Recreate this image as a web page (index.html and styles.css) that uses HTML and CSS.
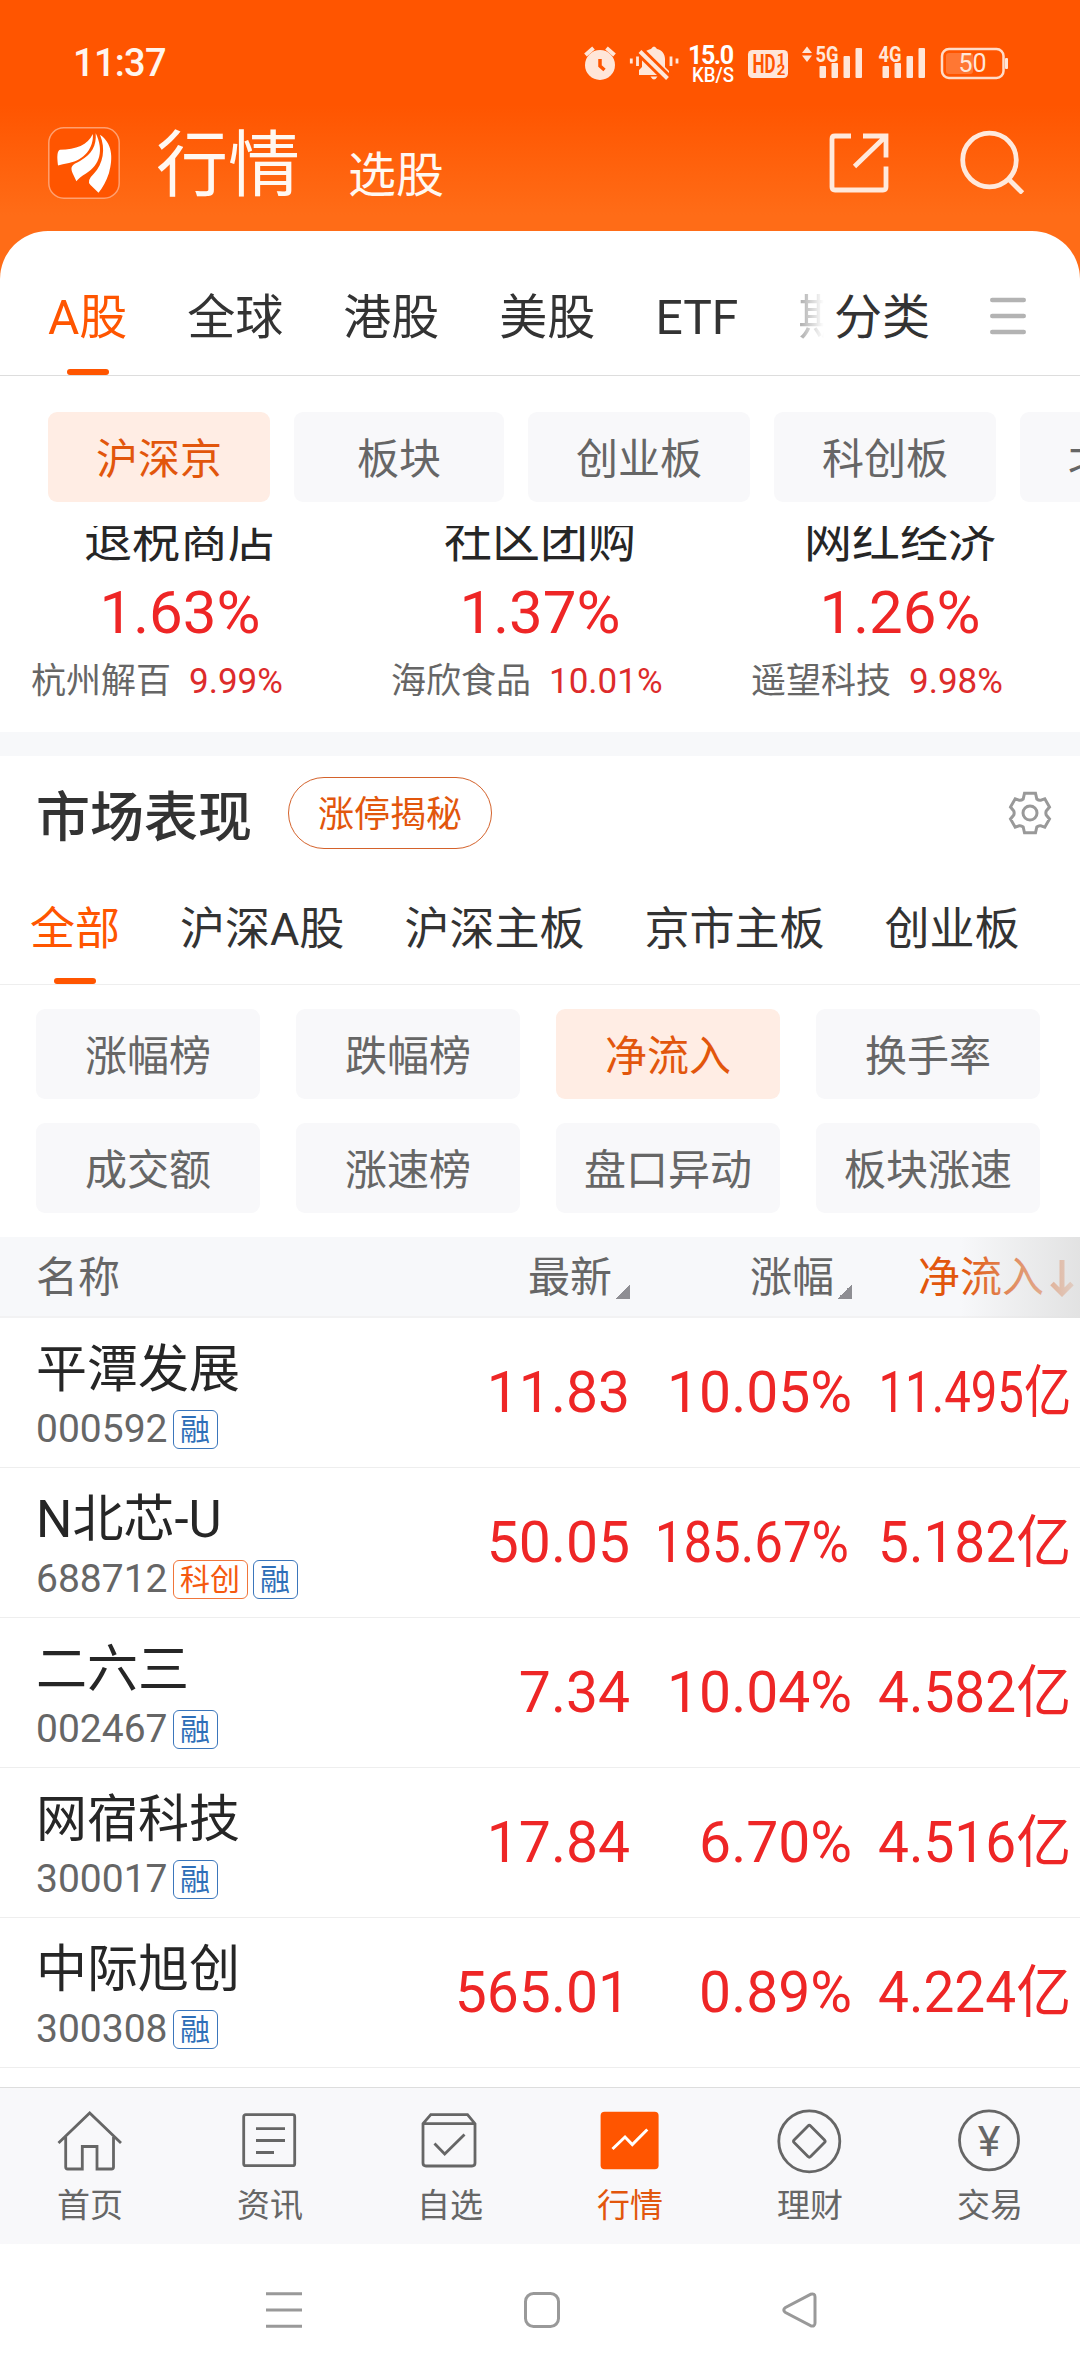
FILE: index.html
```html
<!DOCTYPE html>
<html lang="zh-CN">
<head>
  <meta charset="UTF-8" />
  <meta name="viewport" content="width=device-width, initial-scale=1.0"/>
  <title>行情</title>
  <link rel="stylesheet" href="styles.css">
</head>
<body>
  <div class="phone">

    <!-- Status bar -->
    <div class="status-bar">
      <span class="time">11:37</span>
      <svg class="status-icons" width="430" height="40" viewBox="580 42 430 40">
        <!-- alarm -->
        <circle cx="600" cy="64" r="15"/>
        <path d="M585.500 54l8-7M614.500 54l-8-7" class="line"/>
        <path d="M600 58v7l4.500 4" class="cut"/>
        <!-- muted bell -->
        <path d="M639 74v-5l3-3v-8c0-6 4-9 9-10q3-5 6 0c5 1 8 5 8 10v8l4 4v4zM650.500 75.500h7q-3.500 6-7 0z"/>
        <path d="M639 49.500L669 79" class="slash-gap"/>
        <path d="M640 50.500L667.500 77.500" class="line"/>
        <path d="M631.300 57.500v5M637.500 55.500v9.500M671 55.500v9.500M677 57.500v5" class="line thin"/>
        <!-- network speed -->
        <text x="711" y="63" class="speed" textLength="46">15.0</text>
        <text x="713" y="81" class="unit" textLength="42" lengthAdjust="spacingAndGlyphs">KB/S</text>
        <!-- HD -->
        <rect x="748" y="49" width="40" height="28" rx="4.500"/>
        <text x="764" y="71.500" class="hd" textLength="23" lengthAdjust="spacingAndGlyphs">HD</text>
        <text x="781" y="62.500" class="hd-num">1</text>
        <text x="781" y="74" class="hd-num">2</text>
        <!-- 5G signal -->
        <path d="M802 52l5-6.500 5 6.500zM802 54.500l5 6.500 5-6.500z"/>
        <text x="827" y="60.500" class="net" textLength="23" lengthAdjust="spacingAndGlyphs">5G</text>
        <rect x="819.500" y="65" width="6.500" height="12" rx="1"/>
        <rect x="831.500" y="62" width="6.500" height="15" rx="1"/>
        <rect x="843.500" y="55" width="6.500" height="22" rx="1"/>
        <rect x="855.500" y="47" width="6.500" height="30" rx="1"/>
        <!-- 4G signal -->
        <text x="890" y="60.500" class="net" textLength="23" lengthAdjust="spacingAndGlyphs">4G</text>
        <rect x="882.500" y="65" width="6.500" height="12" rx="1"/>
        <rect x="894.500" y="62" width="6.500" height="15" rx="1"/>
        <rect x="906.500" y="55" width="6.500" height="22" rx="1"/>
        <rect x="918.500" y="47" width="6.500" height="30" rx="1"/>
        <!-- battery -->
        <rect x="942" y="48" width="61.500" height="29" rx="7" class="battery"/>
        <rect x="946" y="52" width="27" height="21" rx="3" class="charge"/>
        <rect x="1005" y="57" width="3" height="11" rx="1"/>
        <text x="972.500" y="71" class="percent">50</text>
      </svg>
    </div>

    <!-- Header -->
    <div class="header">
      <svg class="logo" width="72" height="72" viewBox="0 0 72 72">
        <rect x=".8" y=".8" width="70.400" height="70.400" rx="15"/>
        <path d="M44.800 7C40 18 28 22.500 12 22.700Q8 24 10 38.500Q14 37 21 36C36 33 46 21 44.800 7z"/>
        <path d="M47.700 6.300C48.500 19 44 27 32 34C24 38 22 39 24.500 46L28.400 54.300Q31 50.500 38 46.500C52 38 56 23 47.700 6.300z"/>
        <path d="M52 7.700C64 16 65.500 30 61 46Q57 58 50.500 65.700L42.500 58Q38 54 46 46.500C55 37 58 22 52 7.700z"/>
      </svg>
      <h1 class="page-title">行情</h1>
      <span class="sub-title">选股</span>
      <svg class="share" width="60" height="60" viewBox="0 0 60 60">
        <path d="M22 3H6Q3 3 3 6V54Q3 57 6 57H54Q57 57 57 54V33.500M34 3H57V24.500M55.500 4.500L25.500 33.500"/>
      </svg>
      <svg class="search" width="66" height="64" viewBox="0 0 66 64">
        <circle cx="30.500" cy="30" r="26.800"/>
        <path d="M49.500 49L63.500 63"/>
      </svg>
    </div>

    <div class="panel">
      <!-- Market tabs -->
      <div class="market-tabs">
        <div class="market-scroll">
          <span class="active">A股</span>
          <span>全球</span>
          <span>港股</span>
          <span>美股</span>
          <span>ETF</span>
          <span>期</span>
        </div>
        <span class="category">分类</span>
        <svg class="menu" width="36" height="38" viewBox="0 0 36 38">
          <path d="M2.200 3H33.800M2.200 19H33.800M2.200 35H33.800"/>
        </svg>
      </div>

      <div class="board-chips">
        <span class="chip active">沪深京</span>
        <span class="chip short">板块</span>
        <span class="chip">创业板</span>
        <span class="chip">科创板</span>
        <span class="chip">北交所</span>
      </div>

      <!-- Hot sectors, scrolled under the chips -->
      <div class="sectors">
        <div class="sector">
          <div class="sector-name">退税商店</div>
          <div class="sector-rate">1.63%</div>
          <div class="sector-stock">杭州解百<b>9.99%</b></div>
        </div>
        <div class="sector">
          <div class="sector-name">社区团购</div>
          <div class="sector-rate">1.37%</div>
          <div class="sector-stock">海欣食品<b>10.01%</b></div>
        </div>
        <div class="sector">
          <div class="sector-name">网红经济</div>
          <div class="sector-rate">1.26%</div>
          <div class="sector-stock">遥望科技<b>9.98%</b></div>
        </div>
      </div>

      <!-- Market performance -->
      <div class="section-head">
        <h2>市场表现</h2>
        <span class="pill">涨停揭秘</span>
        <svg class="gear" width="44" height="44" viewBox="0 0 44 44">
          <path d="M16.500 2.200H27.500L28.800 8Q31 9.800 33 9.200L36.800 7.800L41.500 16L38.200 20Q37.500 22 38.200 24L41.500 28L36.800 36.200L33 34.800Q31 34.200 28.800 36L27.500 41.800H16.500L15.200 36Q13 34.200 11 34.800L7.200 36.200L2.500 28L5.800 24Q6.500 22 5.800 20L2.500 16L7.200 7.800L11 9.200Q13 9.800 15.200 8z"/>
          <circle cx="22" cy="22" r="7"/>
        </svg>
      </div>

      <div class="list-tabs">
        <span class="active">全部</span>
        <span>沪深A股</span>
        <span>沪深主板</span>
        <span>京市主板</span>
        <span>创业板</span>
      </div>

      <div class="rank-grid">
        <span class="chip">涨幅榜</span>
        <span class="chip">跌幅榜</span>
        <span class="chip active">净流入</span>
        <span class="chip">换手率</span>
        <span class="chip">成交额</span>
        <span class="chip">涨速榜</span>
        <span class="chip">盘口异动</span>
        <span class="chip">板块涨速</span>
      </div>

      <!-- Stock table -->
      <div class="row table-head">
        <span class="name-col">名称</span>
        <span class="sortable">最新</span>
        <span class="sortable">涨幅</span>
        <span class="sorted">净流入<svg width="24" height="38" viewBox="0 0 24 38"><path d="M12 1V34M2 24.500L12 34.500L22 24.500"/></svg></span>
      </div>
      <div class="row">
        <div class="name-col">
          <div class="name">平潭发展</div>
          <div class="code">000592<i class="tag">融</i></div>
        </div>
        <span class="num">11.83</span>
        <span class="num">10.05%</span>
        <span class="num fit-8">11.495亿</span>
      </div>
      <div class="row">
        <div class="name-col">
          <div class="name">N北芯-U</div>
          <div class="code">688712<i class="tag tag-star">科创</i><i class="tag">融</i></div>
        </div>
        <span class="num">50.05</span>
        <span class="num fit-7">185.67%</span>
        <span class="num fit-6">5.182亿</span>
      </div>
      <div class="row">
        <div class="name-col">
          <div class="name">二六三</div>
          <div class="code">002467<i class="tag">融</i></div>
        </div>
        <span class="num">7.34</span>
        <span class="num">10.04%</span>
        <span class="num fit-6">4.582亿</span>
      </div>
      <div class="row">
        <div class="name-col">
          <div class="name">网宿科技</div>
          <div class="code">300017<i class="tag">融</i></div>
        </div>
        <span class="num">17.84</span>
        <span class="num">6.70%</span>
        <span class="num fit-6">4.516亿</span>
      </div>
      <div class="row">
        <div class="name-col">
          <div class="name">中际旭创</div>
          <div class="code">300308<i class="tag">融</i></div>
        </div>
        <span class="num">565.01</span>
        <span class="num">0.89%</span>
        <span class="num fit-6">4.224亿</span>
      </div>
    </div>

    <!-- Bottom navigation -->
    <div class="bottom-nav">
      <div class="nav-item">
        <svg width="72" height="72" viewBox="0 0 72 72"><path d="M4.500 37L35.700 7L67 37M11.700 31V61Q11.700 63 13.700 63H28.300V40.500H43V63H57.500Q59.500 63 59.500 61V31"/></svg>
        <span>首页</span>
      </div>
      <div class="nav-item">
        <svg width="72" height="72" viewBox="0 0 72 72"><rect x="9.700" y="8.700" width="51" height="51" rx="2"/><path d="M22 22.700H51M22 34.500H51M22 46.500H40"/></svg>
        <span>资讯</span>
      </div>
      <div class="nav-item">
        <svg width="72" height="72" viewBox="0 0 72 72"><path d="M9 17.700L16.800 8.700H53.500L61 17.700V57Q61 60 58 60H12Q9 60 9 57zM9 17.700H61M20.500 37.500L30.700 48L50.500 28.500"/></svg>
        <span>自选</span>
      </div>
      <div class="nav-item active">
        <svg width="72" height="72" viewBox="0 0 72 72"><rect x="6.600" y="5.700" width="58" height="57.600" rx="4" class="solid"/><path d="M18.500 43L31 31L38.300 38.500L53.300 23.500"/></svg>
        <span>行情</span>
      </div>
      <div class="nav-item">
        <svg width="72" height="72" viewBox="0 0 72 72"><circle cx="35.300" cy="35.300" r="30.500"/><path d="M34 20Q35.300 18.700 36.600 20L50.500 34Q51.800 35.300 50.500 36.600L36.600 50.600Q35.300 51.900 34 50.600L20.100 36.600Q18.800 35.300 20.100 34z"/></svg>
        <span>理财</span>
      </div>
      <div class="nav-item">
        <svg width="72" height="72" viewBox="0 0 72 72"><circle cx="35" cy="34.300" r="29.500"/><text x="35" y="50" class="yen">¥</text></svg>
        <span>交易</span>
      </div>
    </div>

    <!-- System keys -->
    <div class="system-nav">
      <svg width="36" height="36" viewBox="0 0 36 36"><path d="M0 1.700H36M0 18H36M0 34.300H36"/></svg>
      <svg width="36" height="36" viewBox="0 0 36 36"><rect x="1.500" y="1.500" width="33" height="33" rx="8"/></svg>
      <svg width="36" height="36" viewBox="0 0 36 36"><path d="M28.500 2.300L3.500 15.500Q0 18 3.500 20.500L28.500 33.700Q33 35 33 31V5Q33 1 28.500 2.300z"/></svg>
    </div>

  </div>
</body>
</html>
```
FILE: styles.css
```css
* {
  box-sizing: border-box;
}

body {
  margin: 0;
  font-family: Roboto, "Noto Sans CJK SC", sans-serif;
  background-color: #fff;
  color: #333;
}

svg {
  display: block;
  flex-shrink: 0;
}

.phone {
  width: 1080px;
  height: 2376px;
  overflow: hidden;
  display: flex;
  flex-direction: column;
  background: linear-gradient(#ff5500 105px, #ff6c17 215px, #ff6c17 300px, #fff 300px);
}

/* Status bar */
.status-bar {
  height: 106px;
  padding: 20px 70px 0 73px;
  display: flex;
  align-items: center;
  justify-content: space-between;
}

.status-bar .time {
  font-size: 38px;
  font-weight: 500;
  letter-spacing: -0.7px;
  color: #fff5ee;
}

.status-icons {
  fill: #ffe6d9;
  overflow: visible;
}

.status-icons text {
  text-anchor: middle;
  font-weight: 500;
}

.status-icons .line {
  stroke: #ffe6d9;
  stroke-width: 4;
  fill: none;
}

.status-icons .thin {
  stroke-width: 2.8;
}

.status-icons .cut {
  stroke: #ff5500;
  stroke-width: 3.5;
  fill: none;
}

.status-icons .slash-gap {
  stroke: #ff5500;
  stroke-width: 10;
}

.status-icons .speed {
  font-size: 25px;
  font-weight: 700;
  fill: #fff;
}

.status-icons .unit {
  font-size: 20px;
  fill: #fff;
}

.status-icons .hd {
  font-size: 25px;
  font-weight: 700;
  fill: #ff5500;
}

.status-icons .hd-num {
  font-size: 15px;
  font-weight: 700;
  fill: #ff5500;
}

.status-icons .net {
  font-size: 22px;
  font-weight: 700;
}

.status-icons .battery {
  fill: none;
  stroke: #ffdcc8;
  stroke-width: 2.5;
}

.status-icons .charge {
  fill: #ff7733;
}

.status-icons .percent {
  font-size: 25px;
  font-weight: 400;
}

/* Header */
.header {
  height: 125px;
  padding: 21px 55px 0 48px;
  display: flex;
  align-items: flex-start;
  color: #fff8f2;
}

.logo rect {
  fill: #ff5500;
  stroke: #ffa070;
  stroke-width: 1.5;
}

.logo path {
  fill: #fff;
}

.page-title {
  margin: 3px 0 0 36px;
  font-size: 72px;
  line-height: 72px;
  font-weight: 400;
}

.sub-title {
  margin: 25px auto 0 48px;
  font-size: 48px;
  line-height: 48px;
}

.share,
.search {
  fill: none;
  stroke: #ffe9dc;
  stroke-width: 4.8;
}

.share {
  margin: 6px 70px 0 0;
}

.search {
  margin-top: 3px;
}

.panel {
  flex: 1;
  border-radius: 48px 48px 0 0;
  background-color: #fff;
}

/* Market tabs */
.market-tabs {
  height: 145px;
  display: flex;
  align-items: flex-start;
  padding: 26px 54px 0 48px;
  border-bottom: 1px solid #ddd;
  font-size: 48px;
  line-height: 122px;
  white-space: nowrap;
}

.market-scroll {
  width: 776px;
  display: flex;
  gap: 60px;
  overflow: hidden;
  -webkit-mask-image: linear-gradient(90deg, #000 715px, transparent 776px);
  mask-image: linear-gradient(90deg, #000 715px, transparent 776px);
}

.market-scroll .active,
.list-tabs .active {
  color: #ff5500;
  display: flex;
  flex-direction: column;
  align-items: center;
}

.market-scroll .active::after,
.list-tabs .active::after {
  content: "";
  width: 42px;
  height: 6px;
  margin-top: -10px;
  border-radius: 3px;
  background-color: #ff5500;
}

.category {
  margin: 0 auto 0 10px;
}

.menu {
  margin-top: 40px;
  stroke: #b3b3b3;
  stroke-width: 4.4;
  stroke-linecap: round;
}

/* Chips */
.chip {
  height: 90px;
  border-radius: 9px;
  background-color: #f8f8fa;
  color: #666;
  font-size: 42px;
  line-height: 95px;
  text-align: center;
  white-space: nowrap;
}

.chip.active {
  background-color: #ffede4;
  color: #e2560c;
}

.board-chips {
  display: flex;
  gap: 24px;
  padding: 36px 0 24px 48px;
  overflow: hidden;
}

.board-chips .chip {
  flex: 0 0 222px;
}

.board-chips .short {
  flex-basis: 210px;
}

/* Hot sectors */
.sectors {
  height: 230px;
  display: flex;
  align-items: flex-end;
  overflow: hidden;
  border-bottom: 24px solid #f7f8fa;
}

.sector {
  width: 360px;
  padding-bottom: 27px;
}

.sector-name {
  font-size: 48px;
  line-height: 60px;
  text-align: center;
  color: #262626;
}

.sector-rate {
  font-size: 60px;
  line-height: 84px;
  text-align: center;
  color: #ee2626;
}

.sector-stock {
  margin-top: 4px;
  padding-left: 31px;
  font-size: 35px;
  line-height: 46px;
  color: #666;
}

.sector-stock b {
  margin-left: 18px;
  font-weight: 400;
  color: #dd2b2b;
}

/* Market performance */
.section-head {
  height: 114px;
  display: flex;
  align-items: center;
  padding: 0 28px 0 36px;
}

.section-head h2 {
  margin: 0;
  font-size: 54px;
  font-weight: 500;
}

.pill {
  height: 72px;
  margin: 0 auto 0 36px;
  padding: 0 29px;
  border: 1.5px solid #d4622b;
  border-radius: 36px;
  color: #e2560c;
  font-size: 36px;
  line-height: 74px;
}

.gear {
  fill: none;
  stroke: #999;
  stroke-width: 3;
}

.list-tabs {
  height: 115px;
  display: flex;
  gap: 60px;
  padding-left: 30px;
  border-bottom: 1px solid #eee;
  font-size: 45px;
  line-height: 119px;
  white-space: nowrap;
}

.list-tabs .active::after {
  margin-top: -11px;
}

.rank-grid {
  display: grid;
  grid-template-columns: repeat(4, 224px);
  gap: 24px 36px;
  padding: 24px 36px;
}

/* Stock table */
.row {
  height: 150px;
  display: grid;
  grid-template-columns: 408px 222px 222px 219px;
  align-items: center;
  border-bottom: 1px solid #eee;
}

.name-col {
  padding: 4px 0 0 36px;
}

.table-head {
  height: 81px;
  position: relative;
  background-color: #f7f8fa;
  border-bottom: 2px solid #f2f2f3;
  font-size: 42px;
  line-height: 82px;
  color: #666;
}

.table-head .name-col {
  padding-top: 0;
}

.table-head::after {
  content: "";
  position: absolute;
  top: 0;
  right: 0;
  width: 120px;
  height: 81px;
  background: linear-gradient(90deg, rgba(224, 224, 224, 0), rgba(224, 224, 224, 0.9));
}

.sortable {
  display: flex;
  justify-content: flex-end;
}

.sortable::after {
  content: "";
  width: 15px;
  height: 15px;
  margin: 47px 0 0 3px;
  background: linear-gradient(135deg, transparent 50%, #8e8e93 50%);
}

.sorted {
  margin-right: -3px;
  display: flex;
  justify-content: flex-end;
  align-items: center;
  gap: 6px;
  color: #e2560c;
}

.sorted svg {
  fill: none;
  stroke: #e2560c;
  stroke-width: 5;
}

.name {
  font-size: 51px;
  line-height: 60px;
  color: #262626;
}

.code {
  display: flex;
  align-items: center;
  margin-top: 9px;
  font-size: 39px;
  line-height: 40px;
  color: #666;
}

.tag {
  height: 39px;
  margin-left: 5px;
  padding: 0 6.5px;
  border: 1.5px solid #3b76bb;
  border-radius: 6px;
  color: #2f6fb8;
  font-size: 30px;
  font-style: normal;
  line-height: 38px;
}

.tag-star {
  border-color: #f0753a;
  color: #f5590f;
}

.num {
  font-size: 57px;
  line-height: 70px;
  text-align: right;
  color: #ee2626;
  white-space: nowrap;
  transform-origin: right;
  justify-self: end;
}

.fit-6 {
  transform: scaleX(0.965);
}

.fit-7 {
  margin-right: 3px;
  transform: scaleX(0.895);
}

.fit-8 {
  transform: scaleX(0.83);
}

/* Bottom navigation */
.bottom-nav {
  height: 157px;
  display: flex;
  background-color: #f8f8fa;
  border-top: 1px solid #ddd;
}

.nav-item {
  width: 180px;
  padding-top: 18px;
  display: flex;
  flex-direction: column;
  align-items: center;
  font-size: 33px;
  line-height: 40px;
  color: #666;
}

.nav-item span {
  margin-top: 8px;
}

.nav-item svg {
  fill: none;
  stroke: #666;
  stroke-width: 2.8;
}

.nav-item.active {
  color: #e2560c;
}

.nav-item.active svg {
  stroke: #fff;
  stroke-width: 3;
}

.nav-item .solid {
  fill: #ff5500;
  stroke: none;
}

.nav-item .yen {
  fill: #666;
  stroke: none;
  font-size: 43px;
  text-anchor: middle;
}

/* System keys */
.system-nav {
  height: 132px;
  padding-left: 3px;
  display: flex;
  justify-content: center;
  align-items: center;
  gap: 222px;
  background-color: #fff;
}

.system-nav svg {
  fill: none;
  stroke: #999;
  stroke-width: 3;
}
```
